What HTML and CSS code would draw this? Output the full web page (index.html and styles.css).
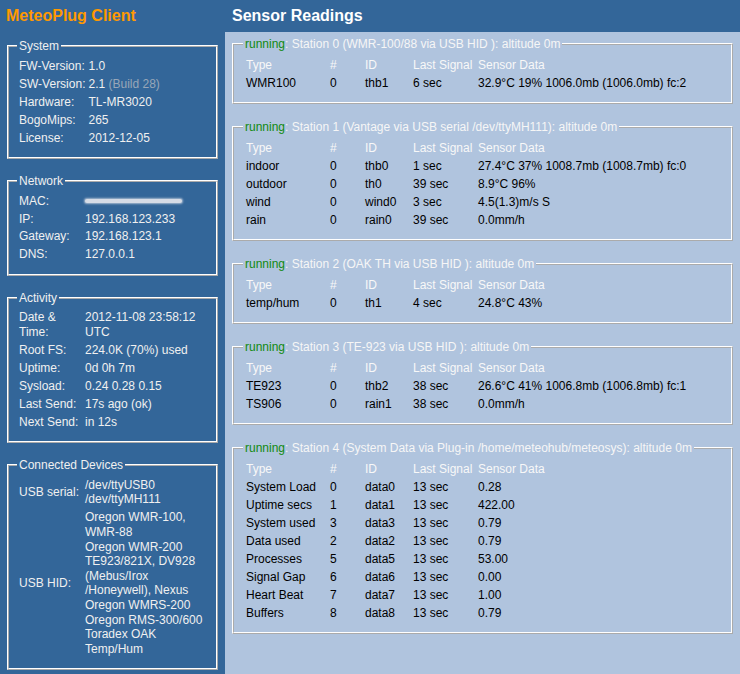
FILE: index.html
```html
<!DOCTYPE html>
<html lang="en">
<head>
<meta charset="utf-8">
<title>MeteoPlug Client</title>
<link rel="stylesheet" href="styles.css">
</head>
<body>
<div class="page">
  <aside class="sidebar">
    <h1 class="brand">MeteoPlug Client</h1>
    <div class="side-boxes">
      <fieldset class="box side">
        <legend>System</legend>
        <table class="kv">
          <tr><td class="k">FW-Version:</td><td>1.0</td></tr>
          <tr><td class="k">SW-Version:</td><td>2.1 <span class="muted">(Build 28)</span></td></tr>
          <tr><td class="k">Hardware:</td><td>TL-MR3020</td></tr>
          <tr><td class="k">BogoMips:</td><td>265</td></tr>
          <tr><td class="k">License:</td><td>2012-12-05</td></tr>
        </table>
      </fieldset>
      <fieldset class="box side">
        <legend>Network</legend>
        <table class="kv">
          <tr><td class="k">MAC:</td><td><span class="blurred"></span></td></tr>
          <tr><td class="k">IP:</td><td>192.168.123.233</td></tr>
          <tr><td class="k">Gateway:</td><td>192.168.123.1</td></tr>
          <tr><td class="k">DNS:</td><td>127.0.0.1</td></tr>
        </table>
      </fieldset>
      <fieldset class="box side">
        <legend>Activity</legend>
        <table class="kv">
          <tr><td class="k">Date &amp;<br>Time:</td><td>2012-11-08 23:58:12<br>UTC</td></tr>
          <tr><td class="k">Root FS:</td><td>224.0K (70%) used</td></tr>
          <tr><td class="k">Uptime:</td><td>0d 0h 7m</td></tr>
          <tr><td class="k">Sysload:</td><td>0.24 0.28 0.15</td></tr>
          <tr><td class="k">Last Send:</td><td>17s ago (ok)</td></tr>
          <tr><td class="k">Next Send:</td><td>in 12s</td></tr>
        </table>
      </fieldset>
      <fieldset class="box side">
        <legend>Connected Devices</legend>
        <table class="kv">
          <tr><td class="k">USB serial:</td><td>/dev/ttyUSB0<br>/dev/ttyMH111</td></tr>
          <tr><td class="k">USB HID:</td><td>Oregon WMR-100,<br>WMR-88<br>Oregon WMR-200<br>TE923/821X, DV928<br>(Mebus/Irox<br>/Honeywell), Nexus<br>Oregon WMRS-200<br>Oregon RMS-300/600<br>Toradex OAK<br>Temp/Hum</td></tr>
        </table>
      </fieldset>
    </div>
  </aside>
  <main class="main">
    <h2 class="heading">Sensor Readings</h2>
    <div class="readings">
      <fieldset class="box station">
        <legend><span class="run">running</span>: Station 0 (WMR-100/88 via USB HID ): altitude 0m</legend>
        <table class="sensors">
          <tr><th class="c-type">Type</th><th class="c-num">#</th><th class="c-id">ID</th><th class="c-sig">Last Signal</th><th>Sensor Data</th></tr>
          <tr><td>WMR100</td><td>0</td><td>thb1</td><td>6 sec</td><td>32.9°C 19% 1006.0mb (1006.0mb) fc:2</td></tr>
        </table>
      </fieldset>
      <fieldset class="box station">
        <legend><span class="run">running</span>: Station 1 (Vantage via USB serial /dev/ttyMH111): altitude 0m</legend>
        <table class="sensors">
          <tr><th class="c-type">Type</th><th class="c-num">#</th><th class="c-id">ID</th><th class="c-sig">Last Signal</th><th>Sensor Data</th></tr>
          <tr><td>indoor</td><td>0</td><td>thb0</td><td>1 sec</td><td>27.4°C 37% 1008.7mb (1008.7mb) fc:0</td></tr>
          <tr><td>outdoor</td><td>0</td><td>th0</td><td>39 sec</td><td>8.9°C 96%</td></tr>
          <tr><td>wind</td><td>0</td><td>wind0</td><td>3 sec</td><td>4.5(1.3)m/s S</td></tr>
          <tr><td>rain</td><td>0</td><td>rain0</td><td>39 sec</td><td>0.0mm/h</td></tr>
        </table>
      </fieldset>
      <fieldset class="box station">
        <legend><span class="run">running</span>: Station 2 (OAK TH via USB HID ): altitude 0m</legend>
        <table class="sensors">
          <tr><th class="c-type">Type</th><th class="c-num">#</th><th class="c-id">ID</th><th class="c-sig">Last Signal</th><th>Sensor Data</th></tr>
          <tr><td>temp/hum</td><td>0</td><td>th1</td><td>4 sec</td><td>24.8°C 43%</td></tr>
        </table>
      </fieldset>
      <fieldset class="box station">
        <legend><span class="run">running</span>: Station 3 (TE-923 via USB HID ): altitude 0m</legend>
        <table class="sensors">
          <tr><th class="c-type">Type</th><th class="c-num">#</th><th class="c-id">ID</th><th class="c-sig">Last Signal</th><th>Sensor Data</th></tr>
          <tr><td>TE923</td><td>0</td><td>thb2</td><td>38 sec</td><td>26.6°C 41% 1006.8mb (1006.8mb) fc:1</td></tr>
          <tr><td>TS906</td><td>0</td><td>rain1</td><td>38 sec</td><td>0.0mm/h</td></tr>
        </table>
      </fieldset>
      <fieldset class="box station">
        <legend><span class="run">running</span>: Station 4 (System Data via Plug-in /home/meteohub/meteosys): altitude 0m</legend>
        <table class="sensors">
          <tr><th class="c-type">Type</th><th class="c-num">#</th><th class="c-id">ID</th><th class="c-sig">Last Signal</th><th>Sensor Data</th></tr>
          <tr><td>System Load</td><td>0</td><td>data0</td><td>13 sec</td><td>0.28</td></tr>
          <tr><td>Uptime secs</td><td>1</td><td>data1</td><td>13 sec</td><td>422.00</td></tr>
          <tr><td>System used</td><td>3</td><td>data3</td><td>13 sec</td><td>0.79</td></tr>
          <tr><td>Data used</td><td>2</td><td>data2</td><td>13 sec</td><td>0.79</td></tr>
          <tr><td>Processes</td><td>5</td><td>data5</td><td>13 sec</td><td>53.00</td></tr>
          <tr><td>Signal Gap</td><td>6</td><td>data6</td><td>13 sec</td><td>0.00</td></tr>
          <tr><td>Heart Beat</td><td>7</td><td>data7</td><td>13 sec</td><td>1.00</td></tr>
          <tr><td>Buffers</td><td>8</td><td>data8</td><td>13 sec</td><td>0.79</td></tr>
        </table>
      </fieldset>
    </div>
  </main>
</div>
</body>
</html>
```

FILE: styles.css
```css
html, body {
  margin: 0;
  padding: 0;
}

body {
  background: #336699;
  font-family: "Liberation Sans", Arial, sans-serif;
  font-size: 12px;
  color: #f0f0f0;
}

.page {
  display: grid;
  grid-template-columns: 225px 1fr;
  min-height: 100vh;
}

/* ---------- sidebar ---------- */
.sidebar {
  padding: 0 5px;
}

.brand {
  margin: 0;
  height: 32px;
  line-height: 32px;
  padding-left: 1px;
  font-size: 16px;
  font-weight: bold;
  color: #ff9900;
}

.side-boxes {
  padding-top: 7px;
}

fieldset.box {
  border: 2px ridge #ffffff;
  min-width: 0;
}

fieldset.box legend {
  padding: 0 2px;
  line-height: 14px;
}

fieldset.side {
  margin: 0 2px 15px;
  padding: 3.5px 8px 9.5px;
}

.kv {
  border-spacing: 1px;
  line-height: 14.6px;
}

.kv td {
  padding: 1.2px 1px;
  vertical-align: middle;
  white-space: nowrap;
}

.kv .k {
  width: 63px;
}

.muted {
  color: #98a6b8;
}

.blurred {
  display: inline-block;
  vertical-align: middle;
  width: 97px;
  height: 4px;
  border-radius: 3px;
  background: #d6dce6;
  box-shadow: 0 0 2px 1px rgba(214, 220, 230, 0.7);
  filter: blur(0.6px);
}

/* ---------- main ---------- */
.main {
  display: flex;
  flex-direction: column;
}

.heading {
  margin: 0;
  height: 32px;
  line-height: 32px;
  padding-left: 7px;
  font-size: 16px;
  font-weight: bold;
  color: #ffffff;
}

.readings {
  flex: 1;
  background: #b0c4de;
  padding: 5px 5px 0;
}

fieldset.station {
  margin: 0 2px 16px;
  padding: 4px 9px 9px;
}

.station legend {
  color: #f6f6f6;
}

.run {
  color: #108a10;
}

.sensors {
  border-spacing: 2px;
  line-height: 14px;
  color: #000000;
}

.sensors th,
.sensors td {
  padding: 1px;
  text-align: left;
  font-weight: normal;
  white-space: nowrap;
}

.sensors th {
  color: #f8f8f8;
}

.sensors .c-type { width: 80px; }
.sensors .c-num { width: 31px; }
.sensors .c-id { width: 44px; }
.sensors .c-sig { width: 61px; }
```
